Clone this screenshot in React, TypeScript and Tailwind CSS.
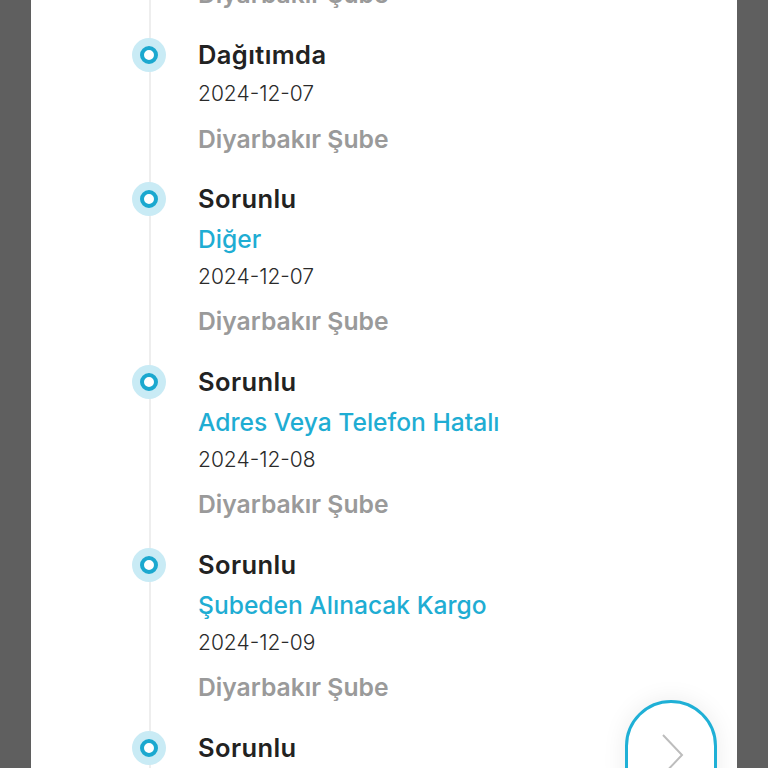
import React from "react";

type Step = {
    title: string;
    reason?: string;
    date: string;
    branch: string;
};

const steps: Step[] = [
    { title: "Dağıtımda", date: "2024-12-07", branch: "Diyarbakır Şube" },
    { title: "Sorunlu", reason: "Diğer", date: "2024-12-07", branch: "Diyarbakır Şube" },
    { title: "Sorunlu", reason: "Adres Veya Telefon Hatalı", date: "2024-12-08", branch: "Diyarbakır Şube" },
    { title: "Sorunlu", reason: "Şubeden Alınacak Kargo", date: "2024-12-09", branch: "Diyarbakır Şube" },
    { title: "Sorunlu", date: "", branch: "" },
];

const font = { fontFamily: "Inter, 'Noto Sans', sans-serif" };

const Dot = () => (
    <div className="flex h-[40px] w-[34px] items-center justify-center">
        <div className="flex h-[34px] w-[34px] items-center justify-center rounded-full bg-[#c9ebf5]">
            <div className="h-[18px] w-[18px] rounded-full border-[4px] border-[#1ba8cf] bg-white" />
        </div>
    </div>
);

const TimelineItem: React.FC<{ step: Step }> = ({ step }) => (
    <div className={step.reason ? "flex gap-[32px] pb-[15px]" : "flex gap-[32px] pb-[14px]"}>
        <Dot />
        <div className="flex flex-col">
            <div className="text-[25.5px] leading-[40px] font-semibold tracking-[0.4px] text-[#222222]">{step.title}</div>
            {step.reason && (
                <div className="text-[24.6px] leading-[40px] font-medium text-[#1fadd3]">{step.reason}</div>
            )}
            {step.date && (
                <div
                    className={
                        step.reason
                            ? "text-[21px] leading-[36px] font-light text-[#2a2a2a]"
                            : "text-[21px] leading-[38px] font-light text-[#2a2a2a]"
                    }
                >
                    {step.date}
                </div>
            )}
            {step.branch && (
                <div className="text-[24.7px] leading-[52px] font-semibold text-[#9a9a9a]">{step.branch}</div>
            )}
        </div>
    </div>
);

export default function App() {
    return (
        <div className="flex h-screen w-full overflow-hidden bg-[#5f5f5f]" style={font}>
            <div className="relative ml-[31px] h-full w-[706px] overflow-hidden bg-white">
                {/* timeline track */}
                <div className="absolute top-0 bottom-0 left-[118px] w-[2px] bg-[#eeeeee]" />

                <div className="relative flex flex-col pl-[101px]">
                    <div className="-mt-[32px] pb-[15px] pl-[66px] text-[24.7px] leading-[52px] font-semibold text-[#9a9a9a]">
                        Diyarbakır Şube
                    </div>
                    {steps.map((step, i) => (
                        <TimelineItem key={i} step={step} />
                    ))}
                </div>

                {/* floating next button */}
                <button className="absolute top-[700px] left-[594px] flex h-[120px] w-[92px] justify-center rounded-full border-[3px] border-[#1fb0d6] bg-white pt-[30px] pl-[4px] shadow-[0_0_24px_rgba(0,0,0,0.08)]">
                    <svg width="24" height="44" viewBox="0 0 24 44" fill="none">
                        <polyline points="2,2 21,22 2,42" stroke="#bdbdbd" strokeWidth="2" />
                    </svg>
                </button>
            </div>
        </div>
    );
}
